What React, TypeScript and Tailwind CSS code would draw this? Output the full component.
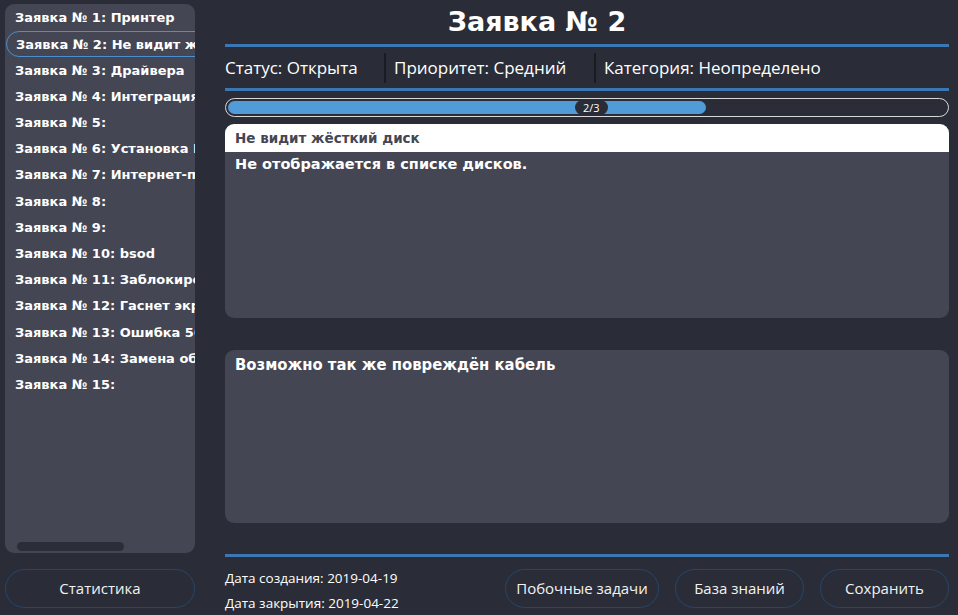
const tickets = [
  'Заявка № 1: Принтер',
  'Заявка № 2: Не видит жёсткий диск',
  'Заявка № 3: Драйвера',
  'Заявка № 4: Интеграция с 1С',
  'Заявка № 5:',
  'Заявка № 6: Установка ПО',
  'Заявка № 7: Интернет-подключение',
  'Заявка № 8:',
  'Заявка № 9:',
  'Заявка № 10: bsod',
  'Заявка № 11: Заблокирована учётка',
  'Заявка № 12: Гаснет экран',
  'Заявка № 13: Ошибка 500',
  'Заявка № 14: Замена оборудования',
  'Заявка № 15:',
];

const tahoma = "font-['DejaVu_Sans',sans-serif]";
const ui = "font-['Open_Sans','Noto_Sans',sans-serif]";

function RoundButton({ label, className = '' }: { label: string; className?: string }) {
  return (
    <button
      className={`shrink-0 h-[39px] rounded-full border border-[#26466b] text-[15px] text-[#f2f2f2] ${ui} ${className}`}
    >
      {label}
    </button>
  );
}

export default function App() {
  const selected = 1;

  return (
    <div className="w-[958px] h-[615px] bg-[#2a2d37] flex overflow-hidden">
      <aside className="w-[190px] ml-[5px] pt-[4px] flex flex-col shrink-0">
        <div className="shrink-0 h-[549px] rounded-[9px] bg-[#444653] overflow-hidden flex flex-col pt-[1px]">
          <ul className="flex flex-col">
            {tickets.map((t, i) => (
              <li
                key={t}
                className={`shrink-0 h-[26.2px] flex items-center whitespace-nowrap text-[13px] font-bold text-white ${tahoma} ${
                  i === selected
                    ? 'ml-[1px] pl-[9px] w-[230px] rounded-full border border-[#4a8fd0]'
                    : 'pl-[10px]'
                }`}
              >
                {t}
              </li>
            ))}
          </ul>
          <div className="mt-auto mb-[2px] ml-[12px] w-[107px] h-[9px] rounded-full bg-[#2b2e39]" />
        </div>
        <RoundButton label="Статистика" className="mt-[16px] w-full" />
      </aside>

      <main className="ml-[30px] w-[724px] flex flex-col shrink-0">
        <h1
          className={`shrink-0 h-[44px] flex items-center justify-center pr-[100px] text-[27px] font-bold text-white ${tahoma}`}
        >
          Заявка № 2
        </h1>
        <div className="shrink-0 h-[3px] bg-[#3a77b3]" />

        <div className={`shrink-0 h-[41px] flex items-center text-[17px] text-white ${ui}`}>
          <span className="w-[159px]">Статус: Открыта</span>
          <span className="w-[2px] h-[30px] bg-[#1a1c23]" />
          <span className="w-[208px] pl-[8px]">Приоритет: Средний</span>
          <span className="w-[2px] h-[30px] bg-[#1a1c23]" />
          <span className="pl-[8px]">Категория: Неопределено</span>
        </div>
        <div className="shrink-0 h-[3px] bg-[#3a77b3]" />

        <div className="shrink-0 mt-[7px] h-[19px] rounded-full border border-[#d8d8d8] p-[2px] relative">
          <div className="h-full w-[66.6%] rounded-full bg-[#519bd8]" />
          <span
            className={`absolute left-[349px] top-[1px] h-[15px] px-[8px] rounded-full bg-[#2a2d37] text-[11px] leading-[15px] text-white ${ui}`}
          >
            2/3
          </span>
        </div>

        <section className="shrink-0 mt-[7px] h-[194px] rounded-[9px] bg-[#444653] overflow-hidden">
          <div
            className={`h-[28px] bg-white flex items-center pl-[10px] text-[13.5px] font-bold text-[#444653] ${tahoma}`}
          >
            Не видит жёсткий диск
          </div>
          <p className={`pl-[10px] pt-[2px] text-[14.5px] font-bold text-white ${tahoma}`}>
            Не отображается в списке дисков.
          </p>
        </section>

        <section className="shrink-0 mt-[32px] h-[173px] rounded-[9px] bg-[#444653] px-[10px] pt-[3px]">
          <p className="text-[16.5px] font-bold text-white font-['DejaVu_Sans_Condensed',sans-serif]">
            Возможно так же повреждён кабель
          </p>
        </section>

        <div className="shrink-0 mt-[31px] h-[3px] bg-[#3a77b3]" />

        <div className="shrink-0 flex items-start">
          <div className={`flex flex-col pt-[9px] text-[13.5px] text-white leading-[25px] ${ui}`}>
            <span>Дата создания: 2019-04-19</span>
            <span>Дата закрытия: 2019-04-22</span>
          </div>
          <div className="ml-auto mt-[12px] flex gap-[16px]">
            <RoundButton label="Побочные задачи" className="w-[154px]" />
            <RoundButton label="База знаний" className="w-[129px]" />
            <RoundButton label="Сохранить" className="w-[129px]" />
          </div>
        </div>
      </main>
    </div>
  );
}
